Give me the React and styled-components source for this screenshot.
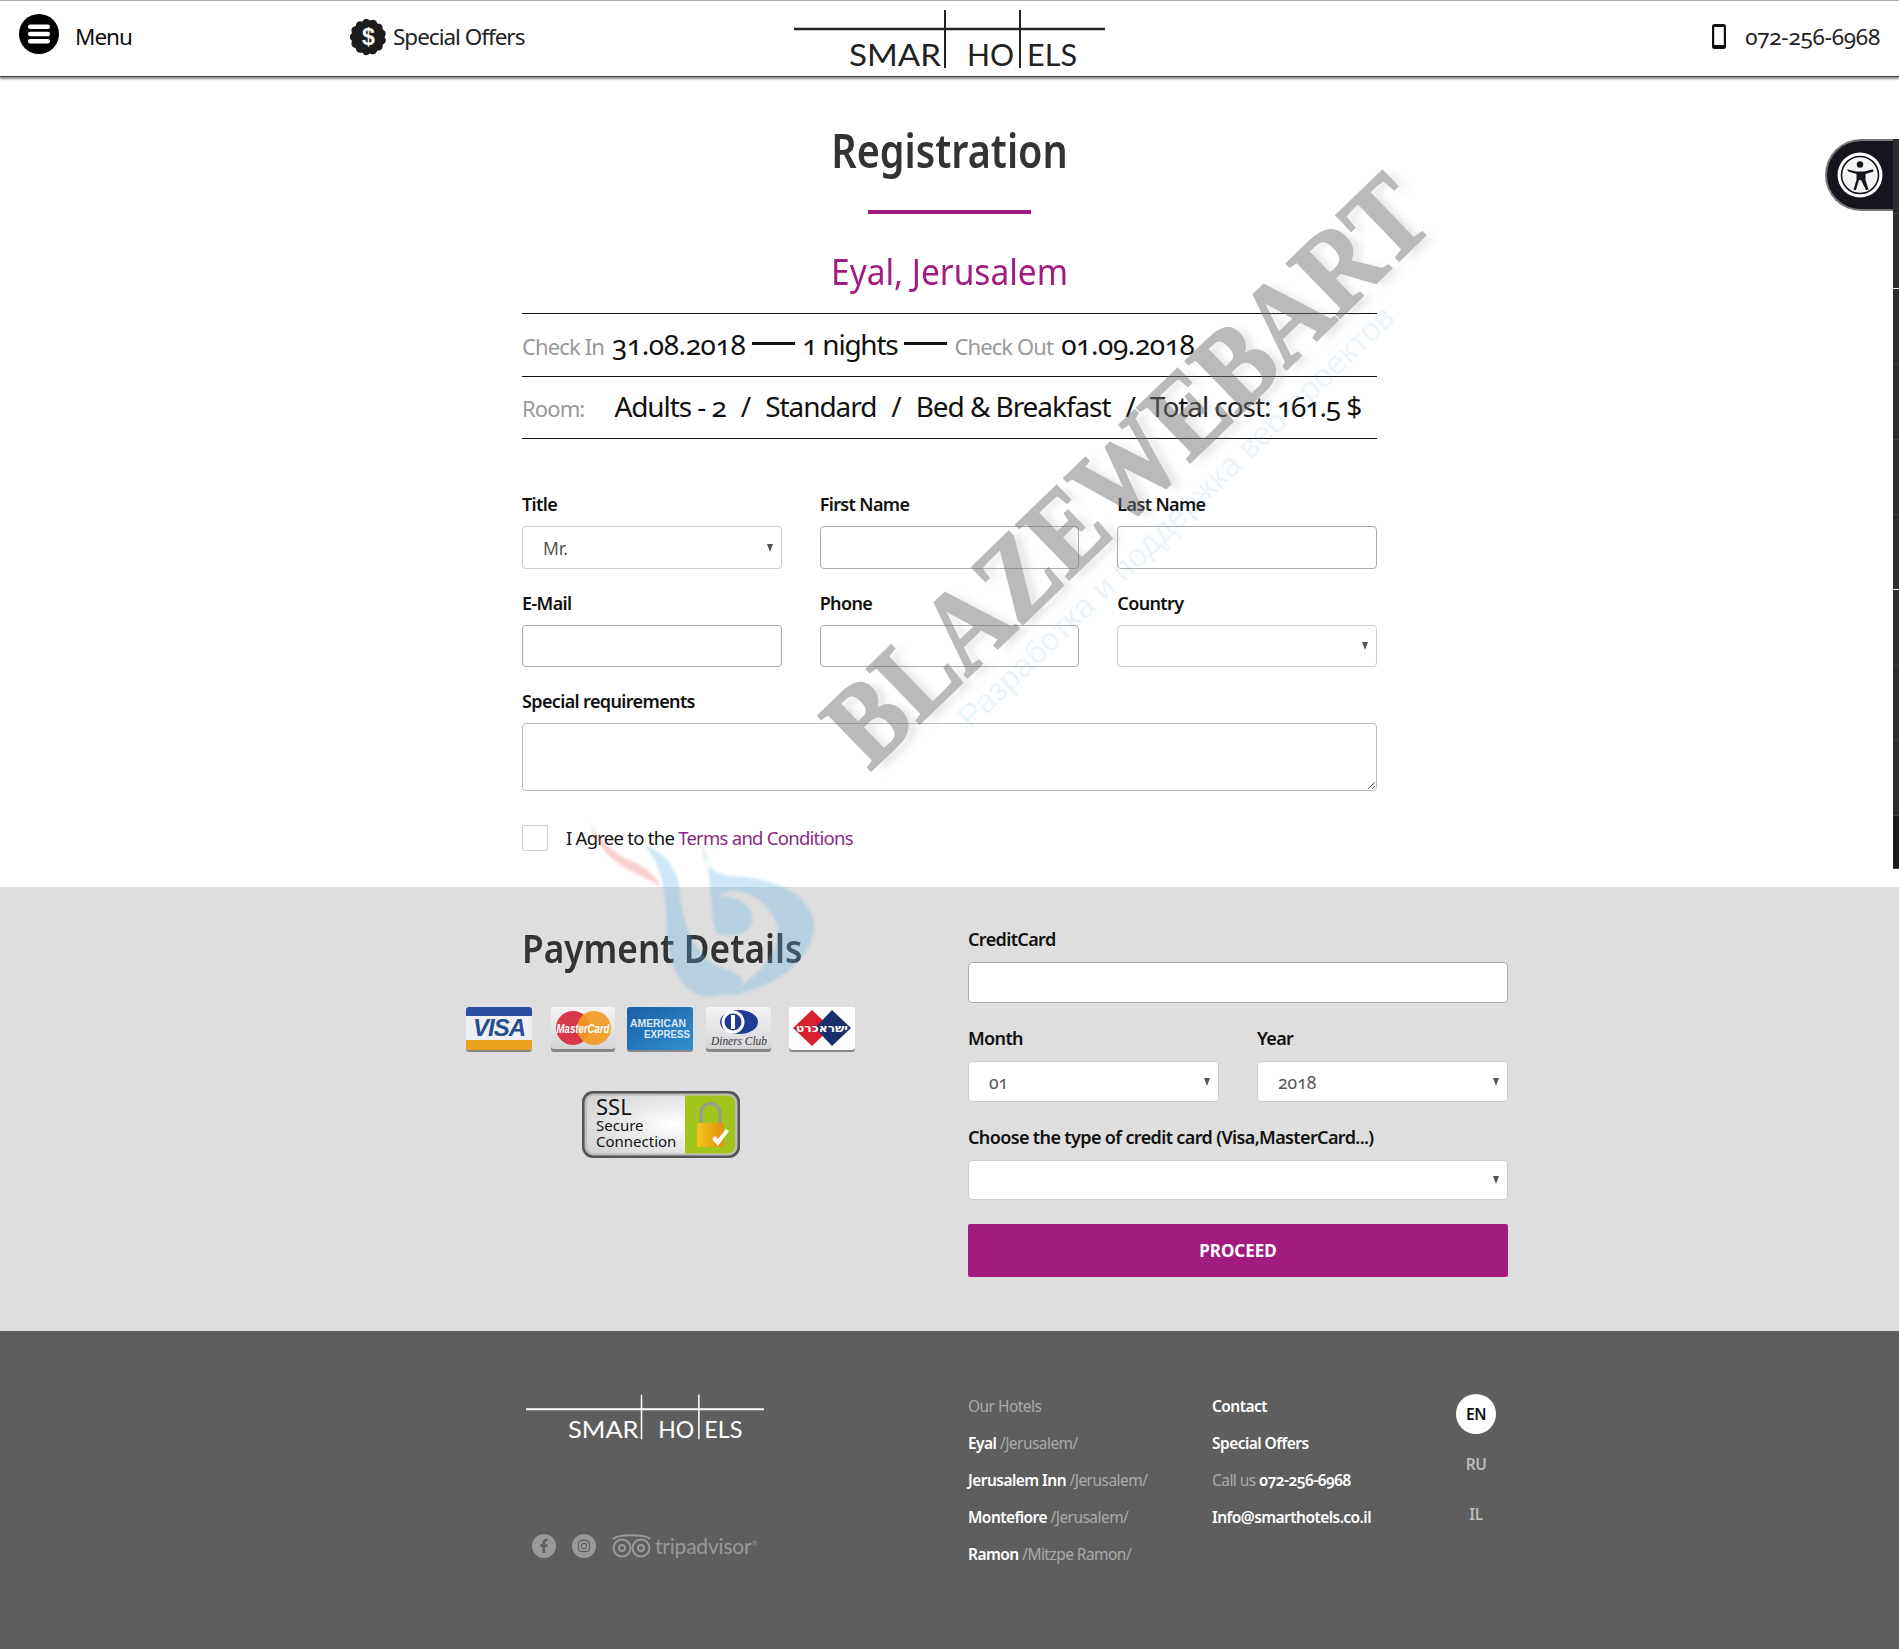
import React from "react";
import styled, { createGlobalStyle } from "styled-components";
import { FaFacebookF, FaInstagram } from "react-icons/fa";

const TEXT_FONT = `"Noto Sans", "Liberation Sans", sans-serif`;
const PURPLE = "#a21b80";

const GlobalStyle = createGlobalStyle`
  html, body {
    margin: 0;
    padding: 0;
    background: #fff;
  }
  body {
    font-family: ${TEXT_FONT};
    font-feature-settings: "onum" 1;
    color: #111;
  }
  * {
    box-sizing: border-box;
  }
`;

const Page = styled.div`
  position: relative;
  height: 1649px;
  overflow: hidden;
`;

const Header = styled.header`
  display: flex;
  align-items: center;
  height: 77px;
  padding-bottom: 4px;
  border-top: 1px solid #aaa;
  border-bottom: 1px solid #444;
  box-shadow: 0 2px 2px rgba(0, 0, 0, 0.45);
  position: relative;
  font-size: 22.5px;
  letter-spacing: -0.045em;
`;

const MenuLink = styled.div`
  display: flex;
  align-items: center;
  gap: 16px;
  width: 330px;
  margin-left: 19px;
`;

const MenuBadge = styled.svg`
  margin-top: -6px;
`;

const OfferLink = styled.div`
  display: flex;
  align-items: center;
  gap: 6px;
  width: 445px;
  color: #222;
`;

const HeaderLogo = styled.div`
  display: flex;
  margin-top: 6px;
`;

const PhoneLink = styled.div`
  display: flex;
  align-items: center;
  gap: 19px;
  margin-left: auto;
  padding-right: 19px;
  letter-spacing: -0.01em;
  color: #222;
`;

const Main = styled.main`
  width: 855px;
  margin: 0 auto;
  padding-top: 48px;
`;

const Title = styled.h1`
  margin: 0;
  font-size: 46px;
  line-height: 50px;
  font-weight: 600;
  text-align: center;
  color: #333;
  transform: scaleX(0.86);
`;

const TitleRule = styled.div`
  width: 163px;
  height: 4px;
  margin: 35px auto 0;
  background: ${PURPLE};
`;

const Subtitle = styled.h2`
  margin: 36px 0 19px;
  font-size: 36px;
  line-height: 44px;
  font-weight: 400;
  text-align: center;
  color: ${PURPLE};
  transform: scaleX(0.93);
`;

const StayRow = styled.div`
  display: flex;
  align-items: center;
  height: ${(p) => p.$height}px;
  padding-bottom: 3px;
  border-top: 1px solid #111;
  border-bottom: ${(p) => (p.$last ? "1px solid #111" : "none")};
  font-size: 28px;
  letter-spacing: ${(p) => (p.$last ? "-0.038em" : "-0.045em")};
  white-space: pre;
  color: #111;
`;

const Digits = styled.span`
  letter-spacing: -0.015em;
`;

const Muted = styled.span`
  margin-top: 4px;
  margin-right: ${(p) => p.$gap || 8}px;
  font-size: 22px;
  letter-spacing: -0.04em;
  color: #999;
`;

const Dash = styled.span`
  width: 43px;
  height: 3px;
  margin: 0 7px;
  background: #111;
`;

const Slash = styled.span`
  margin: 0 15px;
`;

const FormGrid = styled.div`
  display: grid;
  grid-template-columns: repeat(3, 1fr);
  column-gap: 38px;
  row-gap: 23px;
  margin-top: 54px;
`;

const Field = styled.div`
  grid-column: ${(p) => (p.$full ? "1 / -1" : "auto")};
`;

const Label = styled.label`
  display: block;
  margin-bottom: 11px;
  font-size: 18px;
  line-height: 22px;
  font-weight: 600;
  letter-spacing: -0.035em;
  white-space: nowrap;
  color: #111;
`;

const PayLabel = styled(Label)`
  margin-bottom: 12px;
`;

const TextInput = styled.input`
  display: block;
  width: 100%;
  height: ${(p) => p.$height || 43}px;
  border: 1px solid #aaa;
  border-radius: 4px;
  background: #fff;
`;

const TextArea = styled.textarea`
  display: block;
  width: 100%;
  height: 68px;
  border: 1px solid #bbb;
  border-radius: 4px;
  resize: vertical;
`;

const SelectWrap = styled.div`
  position: relative;
  &::after {
    content: "";
    position: absolute;
    right: 9px;
    top: 50%;
    margin-top: -4px;
    border-left: 3.5px solid transparent;
    border-right: 3.5px solid transparent;
    border-top: 8px solid #555;
  }
`;

const Select = styled.select`
  display: block;
  width: 100%;
  height: ${(p) => p.$height || 42}px;
  padding-left: 20px;
  appearance: none;
  border: 1px solid #ccc;
  border-radius: 4px;
  background: #fff;
  font-family: ${TEXT_FONT};
  font-feature-settings: "onum" 1;
  font-size: 17.5px;
  color: #555;
`;

const AgreeRow = styled.div`
  display: flex;
  align-items: center;
  gap: 18px;
  margin-top: 34px;
  padding-bottom: 36px;
  font-size: 18.5px;
  letter-spacing: -0.04em;
`;

const AgreeText = styled.span`
  margin-top: -2px;
`;

const Check = styled.input.attrs({ type: "checkbox" })`
  appearance: none;
  width: 26px;
  height: 26px;
  margin: 0;
  border: 1px solid #ccc;
  border-radius: 2px;
  background: #fff;
`;

const TermsLink = styled.span`
  color: #8b2a80;
`;

const PaySection = styled.section`
  display: flex;
  height: 444px;
  padding-left: 466px;
  background: #dedede;
`;

const PayInfo = styled.div`
  width: 389px;
  margin-right: 113px;
  padding-top: 36px;
`;

const PayTitle = styled.h2`
  margin: 0 0 34px 56px;
  font-size: 40px;
  line-height: 50px;
  font-weight: 600;
  color: #333;
  white-space: nowrap;
  transform: scaleX(0.88);
  transform-origin: left center;
`;

const CardRow = styled.div`
  display: flex;
  height: 45px;
`;

const CardSvg = styled.svg`
  margin-left: ${(p) => p.$gap || 0}px;
`;

const SslBadge = styled.div`
  display: flex;
  justify-content: center;
  margin-top: 39px;
`;

const PayForm = styled.div`
  display: flex;
  flex-direction: column;
  width: 540px;
  padding-top: 41px;
  gap: 24px;
`;

const TwoCols = styled.div`
  display: grid;
  grid-template-columns: 251px 251px;
  justify-content: space-between;
`;

const Proceed = styled.button`
  height: 53px;
  border: 0;
  border-radius: 2px;
  background: #a41b7f;
  color: #fff;
  font-family: ${TEXT_FONT};
  font-size: 17px;
  font-weight: 700;
`;

const Footer = styled.footer`
  display: flex;
  height: 319px;
  padding-left: 526px;
  background: #5e5e5e;
  border-bottom: 1px solid #444;
`;

const FooterBrand = styled.div`
  display: flex;
  flex-direction: column;
  width: 442px;
  padding-top: 63px;
`;

const SocialRow = styled.div`
  display: flex;
  align-items: center;
  margin-top: 92px;
  margin-left: 6px;
`;

const SocialCircle = styled.span`
  display: flex;
  align-items: center;
  justify-content: center;
  width: 24px;
  height: 24px;
  margin-right: 16px;
  border-radius: 50%;
  background: #999;
  color: #5e5e5e;
  font-size: 14px;
`;

const TripWord = styled.span`
  margin-left: 4px;
  font-family: "Lato", sans-serif;
  font-size: 21px;
  letter-spacing: -0.01em;
  color: #999;
`;

const TripMark = styled.sup`
  font-size: 8px;
`;

const FooterCol = styled.div`
  width: ${(p) => p.$width}px;
  padding-top: 57px;
`;

const FooterLine = styled.div`
  height: 37px;
  line-height: 37px;
  font-size: 15.5px;
  letter-spacing: -0.035em;
  font-weight: ${(p) => (p.$dim ? 400 : 600)};
  color: ${(p) => (p.$dim ? "#aaa" : "#fff")};
  white-space: nowrap;
`;

const Dim = styled.span`
  font-weight: 400;
  color: #aaa;
`;

const LangCol = styled.div`
  display: flex;
  flex-direction: column;
  gap: 10px;
  width: 40px;
  padding-top: 63px;
`;

const Lang = styled.div`
  display: flex;
  align-items: center;
  justify-content: center;
  height: 40px;
  border-radius: 50%;
  font-size: 15.5px;
  font-weight: 600;
  letter-spacing: -0.03em;
  background: ${(p) => (p.$active ? "#fff" : "transparent")};
  color: ${(p) => (p.$active ? "#111" : "#bbb")};
`;

const AccessDock = styled.div`
  position: absolute;
  top: 139px;
  right: 0;
  width: 6px;
  height: 730px;
  display: flex;
  flex-direction: column;
`;

const DockSegment = styled.div`
  flex: ${(p) => p.$flex || 1};
  border-bottom: 1px solid ${(p) => (p.$bright ? "#eee" : "#444")};
  background: ${(p) => p.$bg || "#2d2d2d"};
`;

const AccessButton = styled.div`
  position: absolute;
  top: 0;
  right: 6px;
  display: flex;
  align-items: center;
  justify-content: center;
  width: 68px;
  height: 72px;
  border: 2px solid #777;
  border-right: 0;
  border-radius: 36px 0 0 36px;
  background: #15151d;
`;

const WatermarkMain = styled.div`
  position: absolute;
  left: 1126px;
  top: 470px;
  transform: translate(-50%, -50%) rotate(-44deg) scaleY(1.15);
  white-space: nowrap;
  pointer-events: none;
  font-family: "Liberation Serif", serif;
  font-feature-settings: normal;
  font-weight: 700;
  font-size: 101px;
  color: #777;
  -webkit-text-stroke: 2px #777;
  opacity: 0.5;
  text-shadow: 6px 7px 7px rgba(170, 170, 170, 0.5);
`;

const WatermarkSub = styled.div`
  position: absolute;
  left: 1176px;
  top: 517px;
  transform: translate(-50%, -50%) rotate(-44deg);
  white-space: nowrap;
  pointer-events: none;
  font-family: "Liberation Sans", sans-serif;
  font-size: 33px;
  color: rgba(90, 170, 230, 0.13);
`;

const Swirl = styled.svg`
  position: absolute;
  left: 580px;
  top: 820px;
  filter: blur(1.5px);
  pointer-events: none;
`;

const scallop = (cx, cy, lobes, inner, outer) => {
  let d = "";
  for (let i = 0; i < lobes; i++) {
    const a0 = (i / lobes) * Math.PI * 2;
    const a1 = ((i + 0.5) / lobes) * Math.PI * 2;
    const a2 = ((i + 1) / lobes) * Math.PI * 2;
    if (i === 0) d += `M${cx + inner * Math.cos(a0)} ${cy + inner * Math.sin(a0)}`;
    d += `Q${cx + outer * Math.cos(a1)} ${cy + outer * Math.sin(a1)} ${cx + inner * Math.cos(a2)} ${cy + inner * Math.sin(a2)}`;
  }
  return d + "Z";
};

const MenuIcon = () => (
  <MenuBadge width="40" height="40" viewBox="0 0 40 40">
    <circle cx="20" cy="20" r="20" fill="#000" />
    <rect x="9" y="10.5" width="22" height="4.5" rx="2.2" fill="#fff" />
    <rect x="9" y="17.8" width="22" height="4.5" rx="2.2" fill="#fff" />
    <rect x="9" y="25" width="22" height="4.5" rx="2.2" fill="#fff" />
  </MenuBadge>
);

const OfferIcon = () => (
  <svg width="38" height="38" viewBox="0 0 38 38">
    <path d={scallop(19, 19, 13, 16.5, 20.5)} fill="#1d1d1d" />
    <text x="19" y="27" textAnchor="middle" fontFamily="Liberation Sans, sans-serif" fontWeight="700" fontSize="23" fill="#fff">
      $
    </text>
  </svg>
);

const PhoneIcon = () => (
  <svg width="14" height="25" viewBox="0 0 14 25">
    <rect x="0" y="0" width="14" height="25" rx="2.5" fill="#111" />
    <rect x="2.2" y="3" width="9.6" height="18" fill="#fff" />
  </svg>
);

const Logo = ({ color, scale = 1 }) => (
  <svg width={311 * scale} height={62 * scale} viewBox="0 0 311 62" fill={color}>
    <path d="M0 20H311" stroke={color} strokeWidth="2.6" />
    <path d="M151 1V59M226 1V59" stroke={color} strokeWidth="2" />
    <g fontFamily="Lato, Liberation Sans, sans-serif" fontSize="31" fontWeight="400" letterSpacing="0">
      <text x="55" y="57" textLength="92" lengthAdjust="spacingAndGlyphs">SMAR</text>
      <text x="173" y="57" textLength="47" lengthAdjust="spacingAndGlyphs">HO</text>
      <text x="233" y="57" textLength="50" lengthAdjust="spacingAndGlyphs">ELS</text>
    </g>
  </svg>
);

const AccessIcon = () => (
  <svg width="46" height="46" viewBox="0 0 46 46">
    <circle cx="23" cy="23" r="22.5" fill="#fff" />
    <circle cx="23" cy="23" r="18.5" fill="#f4f4f4" stroke="#15151d" strokeWidth="1.6" />
    <circle cx="23" cy="12.5" r="3.2" fill="#15151d" />
    <path d="M10 17.2l9 2.2h8l9-2.2.6 2.2-8.1 2.6v6l3 9.4-2.4.8L24 28h-2l-3.1 10.2-2.4-.8 3-9.4v-6l-8.1-2.6z" fill="#15151d" />
  </svg>
);

const CardFrame = ({ width, gap, children }) => (
  <CardSvg width={width} height="45" viewBox={`0 0 ${width} 45`} $gap={gap}>
    <rect x="0" y="2" width={width} height="43" rx="3" fill="#888" />
    {children}
  </CardSvg>
);

const SilverGrad = ({ id }) => (
  <defs>
    <linearGradient id={id} x1="0" y1="0" x2="0" y2="1">
      <stop offset="0" stopColor="#f4f4f5" />
      <stop offset="1" stopColor="#d4d5d8" />
    </linearGradient>
  </defs>
);

const VisaCard = () => (
  <CardFrame width={66}>
    <rect width="66" height="43" rx="3" fill="#eef0f4" />
    <path d="M0 9V3a3 3 0 0 1 3-3h60a3 3 0 0 1 3 3v6z" fill="#2b4ea3" />
    <path d="M0 33h66v7a3 3 0 0 1-3 3H3a3 3 0 0 1-3-3z" fill="#eaa21d" />
    <text x="33" y="29" textAnchor="middle" fontFamily="Liberation Sans, sans-serif" fontStyle="italic" fontWeight="700" fontSize="24" letterSpacing="-1" fill="#2a4c8f">
      VISA
    </text>
  </CardFrame>
);

const MasterCardIcon = () => (
  <CardFrame width={64} gap={19}>
    <SilverGrad id="mcBody" />
    <rect width="64" height="42" rx="3" fill="url(#mcBody)" />
    <circle cx="22" cy="21" r="17" fill="#d9384a" />
    <circle cx="43" cy="21" r="17" fill="#f29a24" fillOpacity="0.92" />
    <text x="32" y="26" textAnchor="middle" fontFamily="Liberation Sans, sans-serif" fontStyle="italic" fontWeight="700" fontSize="12.5" textLength="53" lengthAdjust="spacingAndGlyphs" fill="#fff">
      MasterCard
    </text>
  </CardFrame>
);

const AmexCard = () => (
  <CardFrame width={66} gap={12}>
    <defs>
      <linearGradient id="amex" x1="0" y1="0" x2="1" y2="1">
        <stop offset="0" stopColor="#1c5fa6" />
        <stop offset="1" stopColor="#2f8fd0" />
      </linearGradient>
    </defs>
    <rect width="66" height="43" rx="3" fill="url(#amex)" />
    <g fontFamily="Liberation Sans, sans-serif" fontWeight="700" fontSize="10" fill="#dbe9f6">
      <text x="3" y="20" textLength="56" lengthAdjust="spacingAndGlyphs">AMERICAN</text>
      <text x="17" y="31" textLength="46" lengthAdjust="spacingAndGlyphs">EXPRESS</text>
    </g>
  </CardFrame>
);

const DinersCard = () => (
  <CardFrame width={65} gap={13}>
    <SilverGrad id="dinersBody" />
    <rect width="65" height="42" rx="3" fill="url(#dinersBody)" />
    <ellipse cx="33" cy="15" rx="19" ry="12" fill="#1f3b94" />
    <circle cx="27" cy="15" r="11.5" fill="#fff" />
    <circle cx="27" cy="15" r="8.5" fill="#1f3b94" />
    <rect x="25" y="8" width="4" height="14" fill="#fff" />
    <text x="33" y="38" textAnchor="middle" fontFamily="Liberation Serif, serif" fontStyle="italic" fontSize="13" textLength="56" lengthAdjust="spacingAndGlyphs" fill="#333">
      Diners Club
    </text>
  </CardFrame>
);

const IsraCard = () => (
  <CardFrame width={66} gap={18}>
    <rect width="66" height="43" rx="3" fill="#fdfdfd" />
    <path d="M4 21L23 3l19 18-19 18z" fill="#d8202f" />
    <path d="M26 21L43 3l19 18-19 18z" fill="#1c2f6d" />
    <text x="33" y="25" textAnchor="middle" fontFamily="DejaVu Sans, sans-serif" fontWeight="700" fontSize="11" textLength="52" lengthAdjust="spacingAndGlyphs" fill="#fff">
      ישראכרט
    </text>
  </CardFrame>
);

const SslIcon = () => (
  <svg width="158" height="67" viewBox="0 0 158 67">
    <defs>
      <radialGradient id="sslBody" cx="0.6" cy="0.5" r="0.7">
        <stop offset="0" stopColor="#fff" />
        <stop offset="1" stopColor="#d5d5d5" />
      </radialGradient>
      <linearGradient id="lock" x1="0" y1="0" x2="1" y2="0">
        <stop offset="0" stopColor="#f4c21c" />
        <stop offset="1" stopColor="#e0920f" />
      </linearGradient>
    </defs>
    <rect x="0" y="0" width="158" height="67" rx="11" fill="#555" />
    <rect x="2.5" y="2.5" width="153" height="62" rx="9" fill="#bbb" />
    <rect x="5" y="4.5" width="148" height="58" rx="7" fill="url(#sslBody)" />
    <path d="M103 4.5h43a7 7 0 0 1 7 7v44a7 7 0 0 1-7 7h-43z" fill="#a2c51d" />
    <g fontFamily="Noto Sans, sans-serif" fill="#111">
      <text x="14" y="24" fontSize="22">SSL</text>
      <text x="14" y="40" fontSize="15">Secure</text>
      <text x="14" y="56" fontSize="15">Connection</text>
    </g>
    <path d="M119 33V22a9.5 9.5 0 0 1 19 0v11" fill="none" stroke="#999" strokeWidth="3" />
    <rect x="115" y="32" width="27" height="24" rx="1.5" fill="url(#lock)" />
    <path d="M130 48l6 7 11-15-3-2-8 10-3-3z" fill="#fff" />
  </svg>
);

const TripOwl = () => (
  <svg width="39" height="24" viewBox="0 0 39 24" fill="none" stroke="#999" strokeWidth="2">
    <path d="M1 5c5-5 32-5 37 0" />
    <circle cx="10" cy="14" r="8.5" />
    <circle cx="29" cy="14" r="8.5" />
    <circle cx="10" cy="14" r="3" />
    <circle cx="29" cy="14" r="3" />
  </svg>
);

const SwirlArt = () => (
  <Swirl width="250" height="180" viewBox="0 0 750 540">
    <path d="M30 8C60 70 120 110 170 130C210 150 235 180 240 200C200 170 130 150 90 110C60 80 40 40 30 8Z" fill="#f28d8d" fillOpacity="0.42" />
    <path d="M190 75C250 95 295 140 300 220C305 300 345 420 430 445C520 470 500 520 380 530C300 520 265 430 262 340C258 230 250 130 190 75Z" fill="#5aaee0" fillOpacity="0.3" />
    <path d="M372 75C360 130 400 170 480 170C590 180 680 220 700 300C715 390 620 500 430 530C540 470 610 390 590 310C555 225 470 190 410 230C450 225 500 240 515 280C530 330 470 360 410 340C390 290 400 210 372 75Z" fill="#5aaee0" fillOpacity="0.3" />
  </Swirl>
);

const App = () => (
  <Page>
    <GlobalStyle />
    <Header>
      <MenuLink>
        <MenuIcon />
        Menu
      </MenuLink>
      <OfferLink>
        <OfferIcon />
        Special Offers
      </OfferLink>
      <HeaderLogo>
        <Logo color="#222" />
      </HeaderLogo>
      <PhoneLink>
        <PhoneIcon />
        072-256-6968
      </PhoneLink>
    </Header>

    <Main>
      <Title>Registration</Title>
      <TitleRule />
      <Subtitle>Eyal, Jerusalem</Subtitle>
      <StayRow $height={63}>
        <Muted>Check In</Muted>
        <Digits>31.08.2018</Digits>
        <Dash />
        1 nights
        <Dash />
        <Muted>Check Out</Muted>
        <Digits>01.09.2018</Digits>
      </StayRow>
      <StayRow $height={63} $last>
        <Muted $gap={30}>Room:</Muted>
        Adults - 2
        <Slash>/</Slash>
        Standard
        <Slash>/</Slash>
        Bed &amp; Breakfast
        <Slash>/</Slash>
        Total cost: 161.5 $
      </StayRow>
      <FormGrid>
        <Field>
          <Label>Title</Label>
          <SelectWrap>
            <Select $height={43} defaultValue="Mr.">
              <option>Mr.</option>
            </Select>
          </SelectWrap>
        </Field>
        <Field>
          <Label>First Name</Label>
          <TextInput />
        </Field>
        <Field>
          <Label>Last Name</Label>
          <TextInput />
        </Field>
        <Field>
          <Label>E-Mail</Label>
          <TextInput $height={42} />
        </Field>
        <Field>
          <Label>Phone</Label>
          <TextInput $height={42} />
        </Field>
        <Field>
          <Label>Country</Label>
          <SelectWrap>
            <Select>
              <option></option>
            </Select>
          </SelectWrap>
        </Field>
        <Field $full>
          <Label>Special requirements</Label>
          <TextArea />
        </Field>
      </FormGrid>
      <AgreeRow>
        <Check />
        <AgreeText>
          I Agree to the <TermsLink>Terms and Conditions</TermsLink>
        </AgreeText>
      </AgreeRow>
    </Main>

    <PaySection>
      <PayInfo>
        <PayTitle>Payment Details</PayTitle>
        <CardRow>
          <VisaCard />
          <MasterCardIcon />
          <AmexCard />
          <DinersCard />
          <IsraCard />
        </CardRow>
        <SslBadge>
          <SslIcon />
        </SslBadge>
      </PayInfo>
      <PayForm>
        <div>
          <PayLabel>CreditCard</PayLabel>
          <TextInput $height={41} />
        </div>
        <TwoCols>
          <div>
            <PayLabel>Month</PayLabel>
            <SelectWrap>
              <Select $height={41} defaultValue="01">
                <option>01</option>
              </Select>
            </SelectWrap>
          </div>
          <div>
            <PayLabel>Year</PayLabel>
            <SelectWrap>
              <Select $height={41} defaultValue="2018">
                <option>2018</option>
              </Select>
            </SelectWrap>
          </div>
        </TwoCols>
        <div>
          <PayLabel>Choose the type of credit card (Visa,MasterCard...)</PayLabel>
          <SelectWrap>
            <Select $height={40}>
              <option></option>
            </Select>
          </SelectWrap>
        </div>
        <Proceed>PROCEED</Proceed>
      </PayForm>
    </PaySection>

    <Footer>
      <FooterBrand>
        <Logo color="#fff" scale={0.765} />
        <SocialRow>
          <SocialCircle>
            <FaFacebookF />
          </SocialCircle>
          <SocialCircle>
            <FaInstagram />
          </SocialCircle>
          <TripOwl />
          <TripWord>
            tripadvisor<TripMark>®</TripMark>
          </TripWord>
        </SocialRow>
      </FooterBrand>
      <FooterCol $width={244}>
        <FooterLine $dim>Our Hotels</FooterLine>
        <FooterLine>
          Eyal <Dim>/Jerusalem/</Dim>
        </FooterLine>
        <FooterLine>
          Jerusalem Inn <Dim>/Jerusalem/</Dim>
        </FooterLine>
        <FooterLine>
          Montefiore <Dim>/Jerusalem/</Dim>
        </FooterLine>
        <FooterLine>
          Ramon <Dim>/Mitzpe Ramon/</Dim>
        </FooterLine>
      </FooterCol>
      <FooterCol $width={244}>
        <FooterLine>Contact</FooterLine>
        <FooterLine>Special Offers</FooterLine>
        <FooterLine>
          <Dim>Call us</Dim> 072-256-6968
        </FooterLine>
        <FooterLine>Info@smarthotels.co.il</FooterLine>
      </FooterCol>
      <LangCol>
        <Lang $active>EN</Lang>
        <Lang>RU</Lang>
        <Lang>IL</Lang>
      </LangCol>
    </Footer>

    <SwirlArt />
    <WatermarkMain>BLAZEWEBART</WatermarkMain>
    <WatermarkSub>Разработка и поддержка веб-проектов</WatermarkSub>

    <AccessDock>
      <DockSegment />
      <DockSegment $bright />
      <DockSegment />
      <DockSegment />
      <DockSegment />
      <DockSegment $bright />
      <DockSegment />
      <DockSegment />
      <DockSegment />
      <DockSegment $flex={0.7} $bg="#1a1a22" />
      <AccessButton>
        <AccessIcon />
      </AccessButton>
    </AccessDock>
  </Page>
);

export default App;
